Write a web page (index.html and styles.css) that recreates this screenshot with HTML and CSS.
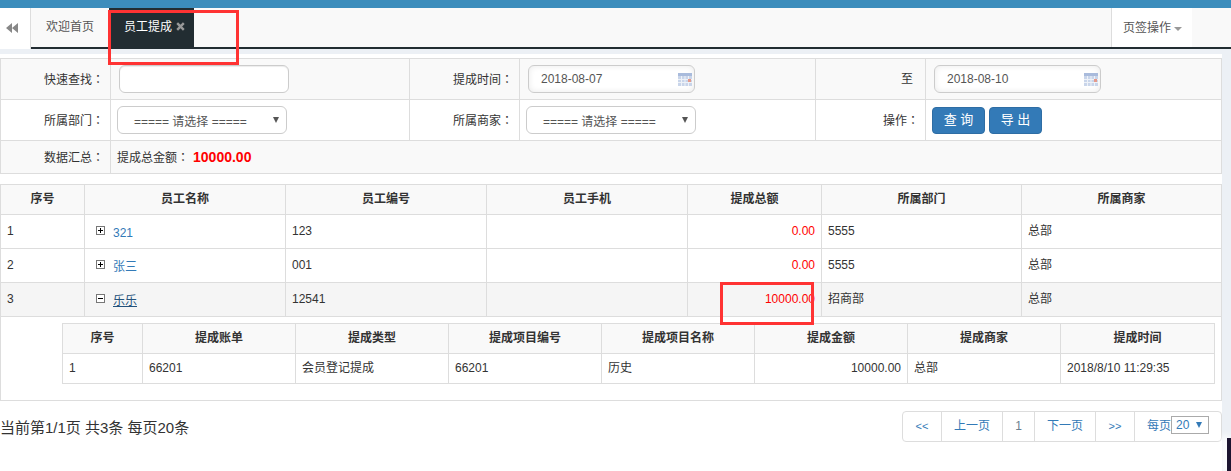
FILE: index.html
```html
<!DOCTYPE html>
<html lang="zh">
<head>
<meta charset="utf-8">
<title>员工提成</title>
<link rel="stylesheet" href="styles.css">
</head>
<body>
<div class="topbar"></div>
<nav class="tabs">
  <a class="tab-back"><svg width="12" height="10" viewBox="0 0 12 10"><path d="M6 0v10L0 5zM12 0v10L6 5z" fill="#888"/></svg></a>
  <a class="tab">欢迎首页</a>
  <a class="tab active">员工提成 <svg class="tab-x" width="9" height="9" viewBox="0 0 9 9"><path d="M1.200 1.200l6.600 6.600M7.800 1.200L1.200 7.800" stroke="#999" stroke-width="2.400"/></svg></a>
  <a class="tab-menu">页签操作<i class="caret"></i></a>
</nav>
<main class="content">
  <table class="tbl search">
    <colgroup><col class="s1"><col class="s2"><col class="s3"><col class="s4"><col class="s5"><col></colgroup>
    <tr class="striped">
      <td class="lbl">快速查找<span class="colon" lang="zh-Hant">：</span></td>
      <td><input class="ctl text" type="text"></td>
      <td class="lbl">提成时间<span class="colon" lang="zh-Hant">：</span></td>
      <td><span class="ctl date">2018-08-07<svg class="cal" width="14" height="13" viewBox="0 0 14 13"><rect width="14" height="13" fill="#c9d5ea"/><rect width="14" height="3" fill="#a9bbdc"/><path d="M3.500 3v10M7 3v10M10.500 3v10M0 6.500h14M0 9.500h14" stroke="#eef2f8"/><rect x="10" y="6" width="3" height="3" fill="#e59a8c"/></svg></span></td>
      <td class="lbl lbl-to">至</td>
      <td><span class="ctl date">2018-08-10<svg class="cal" width="14" height="13" viewBox="0 0 14 13"><rect width="14" height="13" fill="#c9d5ea"/><rect width="14" height="3" fill="#a9bbdc"/><path d="M3.500 3v10M7 3v10M10.500 3v10M0 6.500h14M0 9.500h14" stroke="#eef2f8"/><rect x="10" y="6" width="3" height="3" fill="#e59a8c"/></svg></span></td>
    </tr>
    <tr>
      <td class="lbl">所属部门<span class="colon" lang="zh-Hant">：</span></td>
      <td><span class="ctl sel">===== 请选择 =====<i class="arrow"></i></span></td>
      <td class="lbl">所属商家<span class="colon" lang="zh-Hant">：</span></td>
      <td><span class="ctl sel">===== 请选择 =====<i class="arrow"></i></span></td>
      <td class="lbl">操作<span class="colon" lang="zh-Hant">：</span></td>
      <td><div class="btns"><a class="btn">查 询</a><a class="btn">导 出</a></div></td>
    </tr>
    <tr class="striped">
      <td class="lbl">数据汇总<span class="colon" lang="zh-Hant">：</span></td>
      <td colspan="5">提成总金额<span class="colon" lang="zh-Hant">：</span><b class="total">10000.00</b></td>
    </tr>
  </table>

  <table class="tbl list">
    <colgroup><col class="m1"><col class="m2"><col class="m3"><col class="m4"><col class="m5"><col class="m6"><col></colgroup>
    <tr class="head"><th>序号</th><th>员工名称</th><th>员工编号</th><th>员工手机</th><th>提成总额</th><th>所属部门</th><th>所属商家</th></tr>
    <tr>
      <td>1</td>
      <td class="name"><svg class="tree" width="9" height="9" viewBox="0 0 9 9"><rect x=".5" y=".5" width="8" height="8" fill="#fff" stroke="#777"/><path d="M2 4.500h5M4.500 2v5" stroke="#000"/></svg><a class="link">321</a></td>
      <td>123</td><td></td><td class="money">0.00</td><td>5555</td><td>总部</td>
    </tr>
    <tr>
      <td>2</td>
      <td class="name"><svg class="tree" width="9" height="9" viewBox="0 0 9 9"><rect x=".5" y=".5" width="8" height="8" fill="#fff" stroke="#777"/><path d="M2 4.500h5M4.500 2v5" stroke="#000"/></svg><a class="link">张三</a></td>
      <td>001</td><td></td><td class="money">0.00</td><td>5555</td><td>总部</td>
    </tr>
    <tr class="open">
      <td>3</td>
      <td class="name"><svg class="tree" width="9" height="9" viewBox="0 0 9 9"><rect x=".5" y=".5" width="8" height="8" fill="#fff" stroke="#777"/><path d="M2 4.500h5" stroke="#000"/></svg><a class="link under">乐乐</a></td>
      <td>12541</td><td></td><td class="money">10000.00</td><td>招商部</td><td>总部</td>
    </tr>
    <tr class="detail">
      <td colspan="7">
        <table class="tbl sub">
          <colgroup><col class="d1"><col class="d2"><col class="d2"><col class="d2"><col class="d2"><col class="d2"><col class="d2"><col></colgroup>
          <tr class="head"><th>序号</th><th>提成账单</th><th>提成类型</th><th>提成项目编号</th><th>提成项目名称</th><th>提成金额</th><th>提成商家</th><th>提成时间</th></tr>
          <tr><td>1</td><td>66201</td><td>会员登记提成</td><td>66201</td><td>历史</td><td class="right">10000.00</td><td>总部</td><td>2018/8/10 11:29:35</td></tr>
        </table>
      </td>
    </tr>
  </table>

  <footer class="foot">
    <div class="info">当前第1/1页 共3条 每页20条</div>
    <div class="pager">
      <a class="pg p1">&lt;&lt;</a><a class="pg p2">上一页</a><a class="pg p3">1</a><a class="pg p2">下一页</a><a class="pg p1">&gt;&gt;</a>
      <span class="pg p6">每页<span class="size">20<i class="size-arrow"></i></span></span>
    </div>
  </footer>
</main>
<div class="mark mark-tab"></div>
<div class="mark mark-money"></div>
<div class="corner"></div>
</body>
</html>
```
FILE: styles.css
```css
* { box-sizing: border-box; }
html, body { margin: 0; height: 471px; overflow: hidden; }
body {
  background: #ecf0f5;
  font: 12px/17px "Liberation Sans", "Noto Sans CJK SC", sans-serif;
  color: #333;
  position: relative;
}
.topbar { height: 8px; background: #3c8dbc; }
.tabs {
  height: 41px;
  display: flex;
  background: #f9f9f9;
  border-bottom: 2px solid #222d32;
}
.tab-back {
  width: 31px;
  height: 41px;
  flex: none;
  background: #fff;
  border-right: 1px solid #ddd;
  display: flex;
  align-items: center;
  justify-content: center;
  padding: 0 7px 2px 0;
}
.tab { padding: 0 15px; line-height: 39px; color: #555; }
.tab.active {
  width: 85px;
  padding: 0 0 0 15px;
  background: #222d32;
  color: #fff;
  white-space: nowrap;
  height: 41px;
}
.tab-x { margin-left: 1px; }
.tab-menu {
  margin-left: auto;
  margin-right: 39px;
  width: 81px;
  background: #fff;
  border-left: 1px solid #ddd;
  padding-left: 11px;
  line-height: 40px;
  white-space: nowrap;
  color: #555;
}
.caret {
  display: inline-block;
  margin-left: 3px;
  vertical-align: middle;
  border: 4px solid transparent;
  border-top: 4px solid #999;
  border-bottom: 0;
}
.content {
  margin-top: 5px;
  margin-right: 9px;
  height: 417px;
  background: #fff;
  padding-top: 4px;
}
.tbl {
  width: 100%;
  border-collapse: collapse;
  table-layout: fixed;
}
.tbl td, .tbl th {
  border: 1px solid #ddd;
  padding: 6px;
  text-align: left;
  vertical-align: middle;
  font-weight: 400;
}
.search { height: 116px; margin-bottom: 10px; }
.search tr { height: 41px; }
.search tr:last-child { height: 33px; }
.s1 { width: 110px; }
.s2 { width: 299px; }
.s3 { width: 110px; }
.s4 { width: 296px; }
.s5 { width: 110px; }
.striped { background: #f9f9f9; }
.search .lbl { text-align: right; padding-right: 6px; }
.search .lbl-to { padding-right: 12px; }
.colon { font-family: "Noto Sans CJK TC", sans-serif; }
.ctl {
  display: block;
  height: 28px;
  border: 1px solid #ccc;
  border-radius: 6px;
  background: #fff;
  position: relative;
  color: #555;
  line-height: 26px;
}
.text { width: 170px; margin-left: 2px; outline: 0; box-shadow: inset 0 1px 1px rgba(0,0,0,.075); }
.date { width: 167px; margin-left: 2px; padding-left: 12px; box-shadow: inset 0 0 6px rgba(0,0,0,.09); }
.cal { position: absolute; right: 2px; top: 7px; }
.sel { width: 170px; padding: 2px 0 0 16px; white-space: nowrap; }
.arrow {
  position: absolute;
  right: 7px;
  top: 10px;
  border-style: solid;
  border-color: #555 transparent transparent;
  border-width: 6px 3px 0;
}
.btns { display: flex; gap: 4px; }
.btn {
  width: 53px;
  height: 27px;
  line-height: 24px;
  text-align: center;
  color: #fff;
  background: #337ab7;
  border: 1px solid #2e6da4;
  border-radius: 4px;
  font-size: 13px;
}
.list > tbody > tr { height: 34px; }
.list > tbody > .head { height: 30px; }
.head { background: #f9f9f9; }
.tbl .head th { text-align: center; font-weight: 700; padding: 5px; color: #333; }
.m1 { width: 84px; }
.m2, .m3, .m4 { width: 201px; }
.m5 { width: 134px; }
.m6 { width: 200px; }
.tbl .name { padding-left: 11px; }
.tree { margin-right: 8px; vertical-align: 0; }
.link { color: #337ab7; position: relative; top: 2px; }
.link.under { text-decoration: underline; color: #23527c; }
.tbl .money { text-align: right; color: #f00; }
.open { background: #f5f5f5; }
.list > tbody > .detail > td { padding: 6px 6px 16px 61px; height: 84px; }
.sub tr { height: 30px; }
.d1 { width: 80px; }
.d2 { width: 153px; }
.tbl .right { text-align: right; }
.total { color: #f00; font-size: 14px; margin-left: 4px; }
.foot {
  display: flex;
  justify-content: space-between;
  margin-top: 10px;
}
.info { font-size: 15px; line-height: 20px; margin-top: 7px; }
.pager {
  display: flex;
  width: 320px;
  height: 31px;
  border: 1px solid #ddd;
  border-radius: 4px;
  color: #337ab7;
}
.pg { text-align: center; border-right: 1px solid #ddd; line-height: 28px; }
.p1 { width: 39px; font-size: 11px; }
.p2 { width: 61px; }
.p3 { width: 32px; color: #6a7f90; }
.p6 { flex: 1; border-right: 0; text-align: left; padding-left: 12px; white-space: nowrap; }
.size {
  display: inline-block;
  width: 38px;
  height: 18px;
  line-height: 16px;
  border: 1px solid #aaa;
  padding-left: 4px;
  position: relative;
  vertical-align: 1px;
}
.size-arrow {
  position: absolute;
  right: 6px;
  top: 5px;
  border-style: solid;
  border-color: #337ab7 transparent transparent;
  border-width: 6px 3px 0;
}
.mark { position: absolute; border: 3px solid #ff3333; }
.mark-tab { left: 108px; top: 10px; width: 131px; height: 55px; }
.mark-money { left: 720px; top: 282px; width: 94px; height: 43px; }
.corner {
  position: absolute;
  left: 1227px;
  top: 438px;
  width: 4px;
  height: 33px;
  background: #1b1430;
  box-shadow: -3px 0 6px 2px #fff;
}
```
